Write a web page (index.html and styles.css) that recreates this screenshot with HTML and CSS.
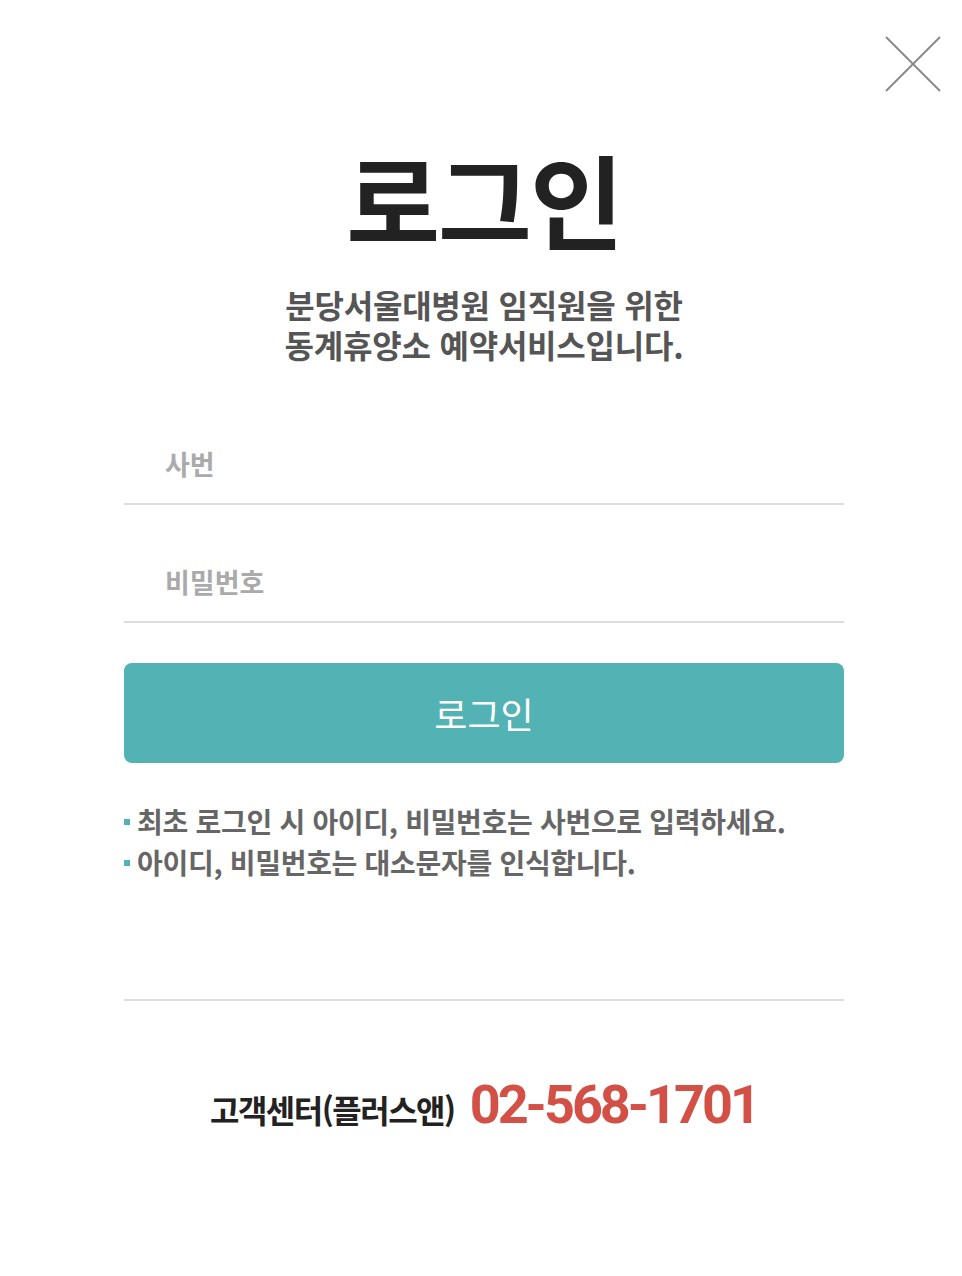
FILE: index.html
```html
<!DOCTYPE html>
<html lang="ko">
<head>
    <meta charset="UTF-8">
    <meta name="viewport" content="width=device-width, initial-scale=1.0">
    <title>로그인</title>
    <link rel="stylesheet" href="styles.css">
</head>
<body>

    <div class="popup">
        <button class="close-button" type="button" aria-label="닫기">
            <svg width="56" height="56" viewBox="0 0 56 56">
                <line x1="1" y1="1" x2="55" y2="55" stroke="#8a8a8a" stroke-width="2"/>
                <line x1="55" y1="1" x2="1" y2="55" stroke="#8a8a8a" stroke-width="2"/>
            </svg>
        </button>

        <h1 class="title">로그인</h1>
        <p class="subtitle">
            <span class="subtitle-line">분당서울대병원 임직원을 위한</span>
            <span class="subtitle-line">동계휴양소 예약서비스입니다.</span>
        </p>

        <form class="login-form" onsubmit="return false">
            <div class="field">
                <input type="text" class="form-input" placeholder="사번">
            </div>
            <div class="field">
                <input type="password" class="form-input" placeholder="비밀번호">
            </div>
            <button type="submit" class="login-button">로그인</button>
        </form>

        <ul class="notice">
            <li>최초 로그인 시 아이디, 비밀번호는 사번으로 입력하세요.</li>
            <li>아이디, 비밀번호는 대소문자를 인식합니다.</li>
        </ul>

        <div class="help">
            <span class="help-label">고객센터(플러스앤)</span>
            <span class="help-phone">02-568-1701</span>
        </div>
    </div>

</body>
</html>
```

FILE: styles.css
```css
body {
    margin: 0;
    padding: 0;
    background-color: #fff;
    font-family: "Noto Sans CJK KR", "Noto Sans", sans-serif;
}

.popup {
    position: relative;
    width: 720px;
    margin-left: 124px;
    padding-top: 128px;
}

.close-button {
    position: absolute;
    top: 36px;
    right: -97px;
    padding: 0;
    border: none;
    background: none;
    cursor: pointer;
}

.close-button svg {
    display: block;
}

.title {
    margin: 0;
    font-size: 102px;
    line-height: 140px;
    font-weight: 700;
    letter-spacing: -2px;
    color: #222;
    text-align: center;
}

.subtitle {
    margin: 16px 0 0;
    font-size: 32px;
    font-weight: 700;
    letter-spacing: -0.2px;
    color: #555;
    text-align: center;
}

.subtitle-line {
    display: block;
    height: 40px;
    line-height: 40px;
}

.login-form {
    margin-top: 59px;
}

.field {
    margin-top: 36px;
}

.form-input {
    display: block;
    width: 100%;
    height: 82px;
    padding: 0 0 0 41px;
    box-sizing: border-box;
    border: none;
    border-bottom: 2px solid #ddd;
    outline: none;
    font-family: inherit;
    font-size: 27px;
    font-weight: 700;
    color: #333;
}

.form-input::placeholder {
    color: #aaa;
}

.login-button {
    display: block;
    width: 100%;
    height: 100px;
    margin-top: 40px;
    border: none;
    border-radius: 8px;
    background-color: #52b2b4;
    color: #fff;
    font-family: inherit;
    font-size: 36px;
    font-weight: 400;
    cursor: pointer;
}

.notice {
    margin: 38px 0 0;
    padding: 0 0 116px;
    list-style: none;
    border-bottom: 2px solid #ddd;
}

.notice li {
    position: relative;
    padding-left: 13px;
    font-size: 28px;
    line-height: 41px;
    font-weight: 700;
    letter-spacing: -0.3px;
    color: #666;
}

.notice li::before {
    content: "";
    position: absolute;
    left: 0;
    top: 18px;
    width: 6px;
    height: 6px;
    background-color: #52b2b4;
}

.help {
    display: flex;
    justify-content: center;
    align-items: baseline;
    gap: 15px;
    margin-top: 72px;
}

.help-label {
    font-size: 32px;
    font-weight: 700;
    letter-spacing: -1.5px;
    color: #222;
}

.help-phone {
    font-family: Roboto, "Liberation Sans", sans-serif;
    font-size: 54px;
    font-weight: 700;
    letter-spacing: -3px;
    color: #d35046;
}
```
